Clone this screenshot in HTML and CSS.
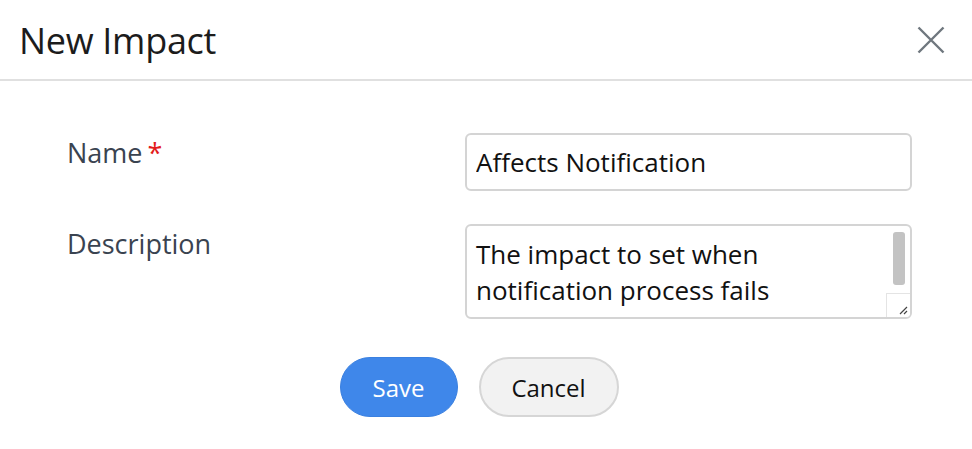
FILE: index.html
```html
<!DOCTYPE html>
<html>
<head>
<meta charset="utf-8">
<link rel="stylesheet" href="styles.css">
</head>
<body>
<div class="dialog">
  <header class="dialog-header">
    <h1 class="dialog-title">New Impact</h1>
    <button class="close-btn" aria-label="Close">
      <svg width="28" height="28" viewBox="0 0 28 28"><path d="M1.5 1.5 L26.5 26.5 M26.5 1.5 L1.5 26.5" stroke="#6f777e" stroke-width="2.4" fill="none"/></svg>
    </button>
  </header>
  <form class="dialog-body">
    <div class="form-row">
      <label class="form-label">Name<span class="req">*</span></label>
      <input class="form-input" type="text" value="Affects Notification">
    </div>
    <div class="form-row">
      <label class="form-label">Description</label>
      <div class="textarea-wrap">
        <textarea class="form-textarea">The impact to set when notification process fails</textarea>
        <span class="scroll-thumb"></span>
        <span class="scroll-corner">
          <svg width="10" height="10" viewBox="0 0 10 10"><path d="M2 9 L9 2 M6 9 L9 6" stroke="#444" stroke-width="1.2" fill="none"/></svg>
        </span>
      </div>
    </div>
    <div class="actions">
      <button type="button" class="btn btn-primary">Save</button>
      <button type="button" class="btn btn-default">Cancel</button>
    </div>
  </form>
</div>
</body>
</html>
```
FILE: styles.css
```css
* { box-sizing: border-box; }
html, body { margin: 0; padding: 0; background: #fff; }
body { font-family: "Open Sans", "Noto Sans", sans-serif; color: #222; }

.dialog { width: 972px; height: 449px; }

.dialog-header {
  height: 81px;
  display: flex;
  align-items: center;
  justify-content: space-between;
  padding: 0 27px 0 19px;
  border-bottom: 2px solid #e0e0e0;
}
.dialog-title {
  margin: 0;
  font-weight: 400;
  font-size: 36px;
  letter-spacing: -0.3px;
  color: #1c1c1c;
  padding-top: 2px;
}
.close-btn {
  border: 0; background: none; padding: 0; margin: 0;
  width: 28px; height: 28px;
  display: flex;
}

.dialog-body {
  padding: 52px 60px 0 67px;
  display: flex;
  flex-direction: column;
}
.form-row {
  display: flex;
  align-items: flex-start;
  margin-bottom: 33px;
}
.form-row + .form-row { margin-bottom: 38px; }
.form-label {
  width: 398px;
  font-size: 27px;
  color: #3a4350;
  padding-top: 1px;
}
.req { color: #e31b1b; margin-left: 5px; }

.form-input, .form-textarea {
  width: 447px;
  border: 2px solid #d4d4d4;
  border-radius: 6px;
  font-family: "Open Sans", "Noto Sans", sans-serif;
  font-size: 26px;
  color: #111;
  padding: 0 9px;
  outline: none;
  background: #fff;
}
.form-input { height: 58px; }

.textarea-wrap { position: relative; width: 447px; height: 95px; }
.form-textarea {
  display: block;
  height: 95px;
  line-height: 36px;
  padding-top: 10px;
  padding-right: 30px;
  padding-bottom: 0;
  resize: none;
  overflow: hidden;
}
.scroll-thumb {
  position: absolute;
  right: 7px;
  top: 8px;
  width: 12px;
  height: 53px;
  background: #c3c3c3;
  border-radius: 3px;
}
.scroll-corner {
  position: absolute;
  right: 2px;
  bottom: 2px;
  width: 24px;
  height: 24px;
  border-top: 1px solid #e4e4e4;
  border-left: 1px solid #e4e4e4;
  display: flex;
  align-items: flex-end;
  justify-content: flex-end;
  padding: 0 2px 2px 0;
  background: #fff;
  border-bottom-right-radius: 4px;
}

.actions {
  display: flex;
  justify-content: center;
  gap: 21px;
  padding-right: 21px;
}
.btn {
  height: 60px;
  border-radius: 30px;
  font-family: "Open Sans", "Noto Sans", sans-serif;
  font-size: 24px;
  padding: 0;
}
.btn-primary {
  width: 118px;
  background: #3f87ea;
  border: 1px solid #3a80e0;
  color: #fff;
}
.btn-default {
  width: 140px;
  background: #f2f2f2;
  border: 2px solid #d6d6d6;
  color: #111;
}
```
